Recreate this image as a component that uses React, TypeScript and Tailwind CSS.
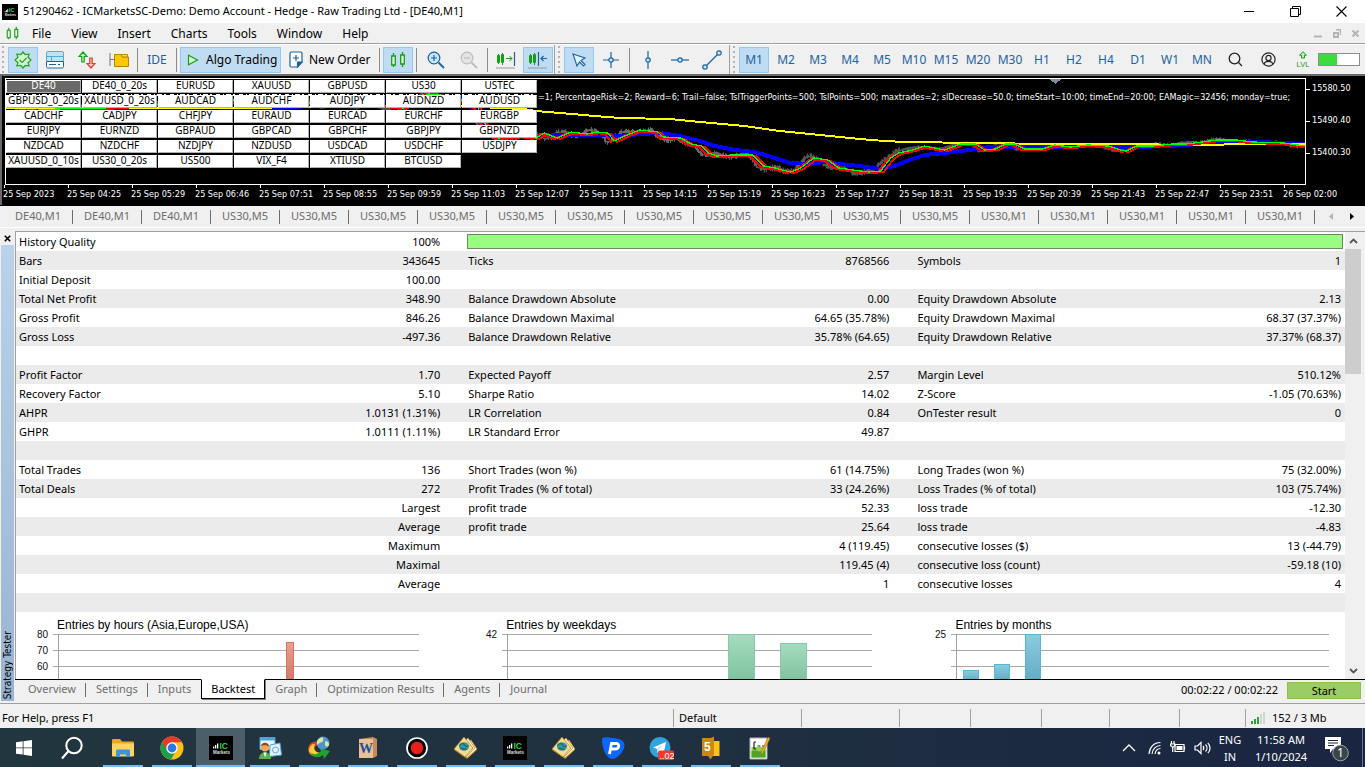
import React from "react";

/* ---------- data ---------- */

const menus = ["File", "View", "Insert", "Charts", "Tools", "Window", "Help"];

const timeframes = ["M1", "M2", "M3", "M4", "M5", "M10", "M15", "M20", "M30", "H1", "H2", "H4", "D1", "W1", "MN"];

const symbols = [
  "DE40", "DE40_0_20s", "EURUSD", "XAUUSD", "GBPUSD", "US30", "USTEC",
  "GBPUSD_0_20s", "XAUUSD_0_20s", "AUDCAD", "AUDCHF", "AUDJPY", "AUDNZD", "AUDUSD",
  "CADCHF", "CADJPY", "CHFJPY", "EURAUD", "EURCAD", "EURCHF", "EURGBP",
  "EURJPY", "EURNZD", "GBPAUD", "GBPCAD", "GBPCHF", "GBPJPY", "GBPNZD",
  "NZDCAD", "NZDCHF", "NZDJPY", "NZDUSD", "USDCAD", "USDCHF", "USDJPY",
  "XAUUSD_0_10s", "US30_0_20s", "US500", "VIX_F4", "XTIUSD", "BTCUSD",
];

const times = [
  "25 Sep 2023", "25 Sep 04:25", "25 Sep 05:29", "25 Sep 06:46", "25 Sep 07:51", "25 Sep 08:55", "25 Sep 09:59",
  "25 Sep 11:03", "25 Sep 12:07", "25 Sep 13:11", "25 Sep 14:15", "25 Sep 15:19", "25 Sep 16:23", "25 Sep 17:27",
  "25 Sep 18:31", "25 Sep 19:35", "25 Sep 20:39", "25 Sep 21:43", "25 Sep 22:47", "25 Sep 23:51", "26 Sep 02:00",
];

const chartTabs = [
  ...Array(3).fill("DE40,M1"),
  ...Array(11).fill("US30,M5"),
  ...Array(5).fill("US30,M1"),
] as string[];

const report: string[][] = [
  ["Bars", "343645", "Ticks", "8768566", "Symbols", "1"],
  ["Initial Deposit", "100.00", "", "", "", ""],
  ["Total Net Profit", "348.90", "Balance Drawdown Absolute", "0.00", "Equity Drawdown Absolute", "2.13"],
  ["Gross Profit", "846.26", "Balance Drawdown Maximal", "64.65 (35.78%)", "Equity Drawdown Maximal", "68.37 (37.37%)"],
  ["Gross Loss", "-497.36", "Balance Drawdown Relative", "35.78% (64.65)", "Equity Drawdown Relative", "37.37% (68.37)"],
  ["", "", "", "", "", ""],
  ["Profit Factor", "1.70", "Expected Payoff", "2.57", "Margin Level", "510.12%"],
  ["Recovery Factor", "5.10", "Sharpe Ratio", "14.02", "Z-Score", "-1.05 (70.63%)"],
  ["AHPR", "1.0131 (1.31%)", "LR Correlation", "0.84", "OnTester result", "0"],
  ["GHPR", "1.0111 (1.11%)", "LR Standard Error", "49.87", "", ""],
  ["", "", "", "", "", ""],
  ["Total Trades", "136", "Short Trades (won %)", "61 (14.75%)", "Long Trades (won %)", "75 (32.00%)"],
  ["Total Deals", "272", "Profit Trades (% of total)", "33 (24.26%)", "Loss Trades (% of total)", "103 (75.74%)"],
  ["", "Largest", "profit trade", "52.33", "loss trade", "-12.30"],
  ["", "Average", "profit trade", "25.64", "loss trade", "-4.83"],
  ["", "Maximum", "", "4 (119.45)", "consecutive losses ($)", "13 (-44.79)"],
  ["", "Maximal", "", "119.45 (4)", "consecutive loss (count)", "-59.18 (10)"],
  ["", "Average", "", "1", "consecutive losses", "4"],
  ["", "", "", "", "", ""],
];

/* ---------- toolbar parts ---------- */

const Grip = () => (
  <svg width="4" height="27" viewBox="0 0 4 27" aria-hidden="true">
    {[1, 6, 11, 16, 21, 26].map((y) => (
      <rect key={y} x="0" y={y - 1} width="2" height="2" fill="#b4b4b4" />
    ))}
  </svg>
);

const Sep = () => <span className="mx-px h-6 w-px bg-[#8c8c8c]" />;

function Tool({ label, active, wide, children }: { label: string; active?: boolean; wide?: boolean; children: React.ReactNode }) {
  return (
    <button
      type="button"
      aria-label={label}
      className={
        "flex h-[26px] shrink-0 items-center justify-center border " +
        (wide ? "w-8 " : "w-[30px] ") +
        (active ? "border-[#90c8f6] bg-[#c0dcf3]" : "border-transparent")
      }
    >
      {children}
    </button>
  );
}

const Candles = ({ size = 18 }: { size?: number }) => (
  <svg width={size} height={size} viewBox="0 0 18 18" fill="#e6f7e6" stroke="#12a012" strokeWidth="1.3" aria-hidden="true">
    <path d="M4.5 2v14M13.5 1v15" />
    <path d="M2.7 5h3.6v9H2.7zM11.7 4h3.6v9h-3.6z" />
  </svg>
);

const IcLogo = ({ size }: { size: number }) => (
  <svg width={size} height={size} viewBox="0 0 24 24" aria-hidden="true">
    <rect width="24" height="24" fill="#000" />
    <path d="M4 12.500h1.300v-2H4zM6 12.500h1.300V9H6zM8 12.500h1.300v-5H8z" fill="#fff" />
    <text x="10.500" y="12.500" fontSize="8.500" fontWeight="700" fontFamily="Liberation Sans, sans-serif" fill="#2fd24a">IC</text>
    <text x="4" y="18" fontSize="4.500" fontWeight="700" fontFamily="Liberation Sans, sans-serif" fill="#ddd">Markets</text>
  </svg>
);

/* ---------- price chart ---------- */

type Pt = [number, number];

const yellow: Pt[] = [[5, 108], [210, 108], [460, 106], [499, 108], [524, 109], [536, 111], [560, 113], [595, 116], [620, 118], [670, 119], [700, 122], [745, 126], [780, 131], [820, 135], [860, 139], [885, 141], [905, 142], [980, 143], [1050, 144], [1120, 144], [1200, 145], [1250, 144], [1306, 144]];
const blue: Pt[] = [[5, 115], [60, 110], [155, 108], [210, 112], [460, 97], [475, 110], [485, 126], [510, 135], [535, 137], [560, 135], [600, 135], [618, 136], [640, 134], [660, 133], [680, 136], [700, 141], [715, 146], [735, 150], [755, 152], [775, 158], [790, 163], [810, 164], [825, 162], [840, 164], [860, 166], [880, 169], [895, 166], [910, 160], [925, 155], [945, 153], [970, 150], [990, 147], [1020, 147], [1060, 147], [1100, 146], [1135, 147], [1170, 146], [1200, 144], [1220, 142], [1260, 142], [1306, 144]];
const price: Pt[] = [[5, 112], [70, 108], [100, 108], [160, 104], [232, 100], [308, 103], [380, 105], [400, 108], [425, 94], [445, 96], [462, 101], [475, 108], [480, 122], [495, 138], [520, 136], [533, 138], [541, 133], [554, 138], [568, 132], [584, 134], [594, 132], [605, 133], [611, 141], [624, 135], [637, 130], [655, 132], [660, 137], [678, 138], [688, 144], [699, 146], [706, 153], [714, 156], [730, 155], [750, 155], [761, 166], [772, 168], [788, 172], [798, 168], [811, 158], [825, 160], [836, 168], [850, 170], [866, 172], [878, 171], [888, 158], [896, 153], [910, 150], [922, 146], [942, 150], [958, 144], [973, 144], [982, 150], [993, 149], [1003, 144], [1012, 144], [1022, 149], [1040, 149], [1052, 145], [1068, 147], [1085, 145], [1106, 146], [1118, 150], [1124, 151], [1134, 146], [1150, 146], [1170, 144], [1184, 144], [1200, 142], [1215, 140], [1235, 140], [1250, 142], [1282, 143], [1295, 145], [1306, 146]];

const toPoints = (pts: Pt[], dx = 0, dy = 0) => pts.map(([x, y]) => `${x + dx},${y + dy}`).join(" ");

function priceAt(x: number) {
  for (let i = 1; i < price.length; i++) {
    if (x <= price[i][0]) {
      const [x0, y0] = price[i - 1];
      const [x1, y1] = price[i];
      return y0 + ((y1 - y0) * (x - x0)) / (x1 - x0);
    }
  }
  return price[price.length - 1][1];
}

const wicks = (() => {
  let d = "";
  let seed = 7;
  for (let x = 8; x < 1304; x += 1) {
    seed = (seed * 16807) % 2147483647;
    const r = (seed % 1000) / 1000;
    const spread = x < 900 ? 1 : 0.5;
    const y = priceAt(x + 4) + Math.sin(x / 5) * 2 * spread;
    const half = 0.5 + r * 3 * spread;
    d += `M${x + 0.5} ${(y - half).toFixed(1)}V${(y + half).toFixed(1)}`;
  }
  return d;
})();

function PriceChart() {
  return (
    <section className="relative flex h-[131px] shrink-0 flex-col overflow-hidden border-l-2 border-t-2 border-[#696969] bg-black font-['DejaVu_Sans_Condensed','DejaVu_Sans',sans-serif] text-[9px] text-white">
      <div className="flex pt-0.5 pl-[3px]">
        <div className="relative h-[107px] min-w-0 flex-1 border border-white">
          <svg className="block h-full w-full" viewBox="5 79 1301 105" preserveAspectRatio="none" fill="none" shapeRendering="crispEdges" aria-label="DE40 price chart">
            <path d="M1050 79h12l-6 5z" fill="#7f8aa0" />
            <path d="M8 94.500H535" stroke="#fff" strokeWidth="2" strokeDasharray="4 3 1 2 5 2 2 4" />
            <path d={wicks} stroke="#707070" strokeWidth="1" />
            <polyline points={toPoints(blue)} stroke="#0000ff" strokeWidth="4" />
            <polyline points={toPoints(yellow)} stroke="#ffff00" strokeWidth="2" />
            <polyline points={toPoints(price, 6, 1)} stroke="#ff0000" strokeWidth="2" />
            <polyline points={toPoints(price, 0, 1)} stroke="#ff0000" strokeWidth="2" />
            <polyline points={toPoints(price, 3, 0)} stroke="#00ff00" strokeWidth="1.300" />
          </svg>
          <p className="absolute top-[10px] right-[2px] left-[532px] overflow-hidden leading-4 whitespace-nowrap">
            =1; PercentageRisk=2; Reward=6; Trail=false; TslTriggerPoints=500; TslPoints=500; maxtrades=2; slDecrease=50.0; timeStart=10:00; timeEnd=20:00; EAMagic=32456; monday=true;
          </p>
        </div>
        <ul className="flex w-[59px] shrink-0 flex-col gap-4 pt-[3px]">
          {["15580.50", "15490.40", "15400.30"].map((p) => (
            <li key={p} className="flex h-4 items-center gap-[2px]">
              <span className="h-px w-1 bg-white" />
              {p}
            </li>
          ))}
        </ul>
      </div>
      <ol className="flex pl-px">
        {times.map((t) => (
          <li key={t} className="flex w-16 shrink-0 flex-col whitespace-nowrap">
            <span className="ml-px h-[3px] w-px bg-white" />
            <span className="leading-3">{t}</span>
          </li>
        ))}
      </ol>
      <div className="absolute top-[4px] left-[4px] grid grid-cols-7 gap-x-px gap-y-[2px] font-['Noto_Sans',sans-serif]">
        {symbols.map((s, i) => (
          <button
            key={s}
            type="button"
            className={
              "flex h-[13px] w-[75px] items-center justify-center border border-r-[#b0b0b0] border-b-[#b0b0b0] border-t-white border-l-white pb-[2px] text-[10px] leading-[9px] whitespace-nowrap " +
              (i === 0 ? "bg-[#696969] text-white" : "bg-white text-black")
            }
          >
            {s}
          </button>
        ))}
      </div>
    </section>
  );
}

/* ---------- distribution charts ---------- */

interface Bar { x: number; w: number; top: number }

function Distribution({ title, labels, bars, end, axis, from, to, line, id }: {
  title: string; labels: string[]; bars: Bar[]; end: number; axis: number; from: string; to: string; line: string; id: string;
}) {
  return (
    <figure className="font-['Liberation_Sans',Arial,sans-serif] text-[12px] text-black">
      <figcaption className="pt-[6px] pl-[41px] leading-[14px]">{title}</figcaption>
      <svg width="449" height="47" viewBox="0 0 449 47" className="block overflow-visible" aria-hidden="true">
        <defs>
          <linearGradient id={id} x1="0" y1="0" x2="0" y2="1">
            <stop offset="0" stopColor={from} />
            <stop offset="1" stopColor={to} />
          </linearGradient>
        </defs>
        {[2, 18, 34].map((y) => (
          <rect key={y} x={axis - 5} y={y} width={end - axis + 5} height="1" fill="#a8a8a8" />
        ))}
        <rect x={axis} y="2" width="1" height="45" fill="#a0a0a0" />
        {labels.map((l, i) => (
          <text key={l} x={axis - 10} y={6 + i * 16} fontSize="10" textAnchor="end" fill="#111">{l}</text>
        ))}
        {bars.map((b) => (
          <rect key={b.x} x={b.x + 0.5} y={b.top + 0.5} width={b.w - 1} height={48 - b.top} fill={`url(#${id})`} stroke={line} />
        ))}
      </svg>
    </figure>
  );
}

/* ---------- strategy tester ---------- */

const testerTabs = ["Overview", "Settings", "Inputs", "Backtest", "Graph", "Optimization Results", "Agents", "Journal"];

function Tester() {
  return (
    <section className="flex min-h-0 flex-1 pt-[3px]">
      <aside className="flex w-[15px] shrink-0 flex-col pb-[2px] pl-px">
        <button type="button" aria-label="Close tester" className="flex h-[14px] w-3 items-center justify-center">
          <svg width="7" height="7" viewBox="0 0 7 7" stroke="#000" strokeWidth="1.600"><path d="M.8.8l5.400 5.400M6.200.8L.8 6.200" /></svg>
        </button>
        <div className="flex min-h-0 w-[13px] flex-1 items-end justify-center bg-gradient-to-b from-[#bad2ea] to-[#99b4d1] pb-[2px]">
          <span className="rotate-180 text-[10px] leading-3 whitespace-nowrap text-black [writing-mode:vertical-rl] font-['DejaVu_Sans_Condensed',sans-serif]">
            Strategy Tester
          </span>
        </div>
      </aside>
      <div className="flex min-w-0 flex-1 flex-col border-t border-[#a0a0a0]">
        <div className="flex min-h-0 flex-1 border-l border-[#a0a0a0] bg-white">
          <div className="min-w-0 flex-1 overflow-hidden">
            <table className="w-full table-fixed border-collapse leading-[19px]">
              <colgroup>
                <col className="w-[15%]" />
                <col className="w-[18.8%]" />
                <col className="w-[15%]" />
                <col className="w-[18.8%]" />
                <col className="w-[15%]" />
                <col />
              </colgroup>
              <tbody>
                <tr className="h-[19px]">
                  <td className="p-0 pl-[3px]">History Quality</td>
                  <td className="p-0 pr-[25px] text-right">100%</td>
                  <td colSpan={4} className="p-0 pr-[2px] pl-[2px]">
                    <div className="h-[15px] border border-[#6b8a62] bg-[#98fd80]" />
                  </td>
                </tr>
                {report.map((row, i) => (
                  <tr key={i} className={"h-[19px] " + (i % 2 === 0 ? "bg-[#ebebeb]" : "bg-white")}>
                    {row.map((cell, j) => (
                      <td
                        key={j}
                        className={
                          j % 2 === 0
                            ? "p-0 pl-[3px] whitespace-nowrap"
                            : j === 5
                              ? "p-0 pr-1 text-right whitespace-nowrap"
                              : "p-0 pr-[25px] text-right whitespace-nowrap"
                        }
                      >
                        {cell}
                      </td>
                    ))}
                  </tr>
                ))}
              </tbody>
            </table>
            <div className="grid grid-cols-[33.8%_33.8%_1fr] overflow-hidden">
              <Distribution id="hours" title="Entries by hours (Asia,Europe,USA)" labels={["80", "70", "60"]} axis={42} end={403} bars={[{ x: 270, w: 8, top: 10 }]} from="#e8a090" to="#cf7a68" line="#e0705c" />
              <Distribution id="days" title="Entries by weekdays" labels={["42"]} axis={42} end={407} bars={[{ x: 263, w: 27, top: 2 }, { x: 315, w: 27, top: 11 }]} from="#a6dcc0" to="#7fc29e" line="#86cba6" />
              <Distribution id="months" title="Entries by months" labels={["25"]} axis={42} end={415} bars={[{ x: 49, w: 16, top: 38 }, { x: 80, w: 16, top: 32 }, { x: 111, w: 16, top: 2 }]} from="#8bcde0" to="#62abc6" line="#55b8d8" />
            </div>
          </div>
          <div className="flex w-4 shrink-0 flex-col items-center bg-[#f0f0f0]">
            <button type="button" aria-label="Scroll up" className="flex h-[17px] w-4 items-center justify-center">
              <svg width="9" height="6" viewBox="0 0 9 6" fill="none" stroke="#555" strokeWidth="1.800"><path d="M1 5l3.500-3.500L8 5" /></svg>
            </button>
            <div className="h-[125px] w-4 bg-[#cdcdcd]" />
            <button type="button" aria-label="Scroll down" className="mt-auto flex h-[17px] w-4 items-center justify-center">
              <svg width="9" height="6" viewBox="0 0 9 6" fill="none" stroke="#555" strokeWidth="1.800"><path d="M1 1l3.500 3.500L8 1" /></svg>
            </button>
          </div>
          <div className="w-1 shrink-0 bg-[#f0f0f0]" />
        </div>
        <nav className="flex h-[24px] shrink-0 border-t border-black bg-[#f0f0f0]">
          <div className="flex pl-[3px]">
            {testerTabs.map((t, i) =>
              t === "Backtest" ? (
                <button key={t} type="button" className="-mt-px h-5 w-16 border border-t-white border-black bg-white text-black shadow-[1px_1px_0_#808080]">
                  {t}
                </button>
              ) : (
                <button key={t} type="button" className="relative flex h-[19px] items-center px-[10px] text-[#6d6d6d]">
                  {t}
                  {i !== 2 && i !== 7 && <span className="absolute top-[3px] right-0 h-[14px] w-px bg-[#6d6d6d]" />}
                </button>
              ),
            )}
          </div>
          <div className="ml-auto flex items-center gap-[9px] pr-1 pb-[2px]">
            <span>00:02:22 / 00:02:22</span>
            <button type="button" className="h-[17px] w-[74px] border border-[#8bc34a] bg-[#9ccc65] leading-[15px]">Start</button>
          </div>
        </nav>
      </div>
    </section>
  );
}

/* ---------- task bar ---------- */

const MetaTrader = () => (
  <svg width="25" height="24" viewBox="0 0 25 24" aria-hidden="true">
    <path d="M1 14l9-4 14 4-10 9z" fill="#b07a20" />
    <path d="M6 12L18 4l6 9-10 9z" fill="#fff6d0" stroke="#b88a30" strokeWidth=".7" />
    <path d="M4 12L15 2l7 10-9 9z" fill="#fdeeb4" stroke="#b88a30" strokeWidth=".7" />
    <path d="M1 13L11 1l9 11-8 9z" fill="#f3dc90" stroke="#a87a20" strokeWidth=".7" />
    <ellipse cx="11" cy="10.500" rx="5" ry="4.300" fill="#3b8fc4" />
    <path d="M6.500 10c1-3 4-3 5-1s2 2 4 .5M7.500 12.500c2-1 3 1.500 6 .5" stroke="#1f7a3a" strokeWidth="1.500" fill="none" />
  </svg>
);

const taskIcons: { name: string; icon: React.ReactNode }[] = [
  {
    name: "File Explorer",
    icon: (
      <svg width="24" height="22" viewBox="0 0 24 22" aria-hidden="true">
        <path d="M1 3.500C1 2.500 1.500 2 2.500 2H9l2 2.500h10.500c1 0 1.500.5 1.500 1.500v13H1z" fill="#e8a820" />
        <path d="M1 6.500h22V18c0 1-.5 1.500-1.500 1.500h-19C1.500 19.500 1 19 1 18z" fill="#fcd462" />
        <path d="M5 20v-6c0-1 .6-1.500 1.500-1.500h11c.9 0 1.500.5 1.500 1.500v6h-4v-2.500h-6V20z" fill="#3f93d8" />
      </svg>
    ),
  },
  {
    name: "Chrome",
    icon: (
      <svg width="24" height="24" viewBox="0 0 24 24" aria-hidden="true">
        <circle cx="12" cy="12" r="11.500" fill="#fbc116" />
        <path d="M12 12L2 6.200A11.500 11.500 0 0 0 11 23.500l5-9z" fill="#1e9e4a" />
        <path d="M2 6.200A11.500 11.500 0 0 1 22 6.200H12L7.500 15z" fill="#e33b2e" />
        <circle cx="12" cy="12" r="5.700" fill="#fff" />
        <circle cx="12" cy="12" r="4.400" fill="#2a78e4" />
      </svg>
    ),
  },
  { name: "IC Markets terminal", icon: <IcLogo size={24} /> },
  {
    name: "Accounts",
    icon: (
      <svg width="24" height="24" viewBox="0 0 24 24" aria-hidden="true">
        <path d="M2 1.500h15v12H2z" fill="#e6f3fb" stroke="#4fa3d8" />
        <path d="M2 1.500h15v3H2z" fill="#4fa3d8" />
        <path d="M12 9l10-2 1.500 12-12 1.500z" fill="#e6f3fb" stroke="#4fa3d8" />
        <circle cx="17.500" cy="14" r="3" fill="none" stroke="#5aaade" />
        <circle cx="7" cy="11.500" r="4" fill="#f2a65a" />
        <path d="M3 10.500c0-5 8-5 8 0-3-1-5-2-8 0z" fill="#8c4a17" />
        <path d="M1 23c0-9 12-9 12 0z" fill="#58b44a" />
        <path d="M5.500 16.500l1.500 5 1.500-5z" fill="#fff" />
      </svg>
    ),
  },
  {
    name: "Download Manager",
    icon: (
      <svg width="24" height="24" viewBox="0 0 24 24" aria-hidden="true">
        <path d="M1 13c1-6 5-8 10-7l1 3c-3 0-5 2-4 5 1 2 4 3 7 2l-1 4C7 22 1 19 1 13z" fill="#e0402c" />
        <path d="M2 14c1-5 3-6 6-6-2 4-1 8 5 9l-1 4C6 21 2 18 2 14z" fill="#f7d030" />
        <path d="M3 16c3 3 7 3 11-1l-2-3 11 3-6 8-1-4C11 23 5 21 3 16z" fill="#1fa32e" />
        <circle cx="16" cy="7" r="6.500" fill="#4d93d4" />
        <path d="M13 2c3-2 4 1 3 3s-4 1-5 4c-2-3-1-5 2-7zM18 5.500c2-1 4 1 4 3s-2 3-4 1z" fill="#d9e79c" />
      </svg>
    ),
  },
  {
    name: "Documents",
    icon: (
      <svg width="20" height="24" viewBox="0 0 20 24" aria-hidden="true">
        <path d="M1 3l14-2 4 2v17l-4 2H1z" fill="#c98a54" />
        <path d="M1 3h14v19H1z" fill="#e7c19a" />
        <text x="1" y="17" fontSize="14" fontWeight="700" fontFamily="Liberation Serif, serif" fill="#1f4f94">W</text>
      </svg>
    ),
  },
  {
    name: "Recorder",
    icon: (
      <svg width="24" height="24" viewBox="0 0 24 24" aria-hidden="true">
        <circle cx="12" cy="12" r="10" fill="#000" stroke="#fff" strokeWidth="1.700" />
        <circle cx="12" cy="12" r="6.200" fill="#e8201c" />
      </svg>
    ),
  },
  { name: "MetaTrader", icon: <MetaTrader /> },
  { name: "IC Markets", icon: <IcLogo size={24} /> },
  { name: "MetaTrader 2", icon: <MetaTrader /> },
  {
    name: "P app",
    icon: (
      <svg width="24" height="24" viewBox="0 0 24 24" aria-hidden="true">
        <path d="M1 4C1 1 4 1 8 1.500c5 .5 15 1 15.500 7C24 15 16 23 11 23 6 23 1 13 1 4z" fill="#0b68fa" />
        <path d="M8.500 18L10.500 7.500H15c4 0 3.500 5.500-1 5.500h-3.500" fill="none" stroke="#fff" strokeWidth="2.800" />
      </svg>
    ),
  },
  {
    name: "Telegram",
    icon: (
      <svg width="25" height="24" viewBox="0 0 25 24" aria-hidden="true">
        <circle cx="11" cy="11.500" r="10.500" fill="#2ea3dc" />
        <path d="M4 11.500l13-5.500-2.500 12-4-3-2 2-.5-4z" fill="#fff" />
        <path d="M8 13l6-4.500-4.500 5.500-1 3z" fill="#b8dcef" />
        <rect x="9" y="14.500" width="16" height="9.500" rx="2" fill="#ea3c30" />
        <text x="10.500" y="22.500" fontSize="9" fontFamily="Liberation Sans, sans-serif" fill="#fff">..02</text>
      </svg>
    ),
  },
  {
    name: "S editor",
    icon: (
      <svg width="20" height="24" viewBox="0 0 20 24" aria-hidden="true">
        <path d="M9 5h9.500v15H9z" fill="#fcc410" />
        <path d="M1 2h9l3-1.500v18L9.500 23.500 7 20H1z" fill="#c98a12" />
        <text x="3" y="15" fontSize="12" fontWeight="700" fontFamily="Liberation Sans, sans-serif" fill="#fff">5</text>
      </svg>
    ),
  },
  {
    name: "Notepad++",
    icon: (
      <svg width="23" height="24" viewBox="0 0 23 24" aria-hidden="true">
        <path d="M2 2h17v21H2z" fill="#fff" stroke="#b0b0b0" />
        <path d="M3.500 11h14v10.500h-14z" fill="#8fd04a" />
        <path d="M3.500 15c4-2 9 2 14-1v7.500h-14z" fill="#4fa428" />
        <path d="M6 6v7M6 6h2M6 13h2M9.500 10h3M14 10h3" stroke="#222" strokeWidth="1.200" fill="none" />
        <path d="M20 1l2 1.500L15 17l-2 1.500.3-2.500z" fill="#f2a92a" stroke="#a86c10" strokeWidth=".5" />
      </svg>
    ),
  },
];

function Taskbar() {
  return (
    <footer className="flex h-[39px] shrink-0 items-stretch bg-gradient-to-r from-[#22363f] via-[#1f3040] to-[#1a2542] text-white">
      <button type="button" aria-label="Start menu" className="flex w-12 items-center justify-center">
        <svg width="16" height="16" viewBox="0 0 16 16" fill="#fff"><path d="M0 2.200L6.700 1.300v6.200H0zM7.500 1.200L16 0v7.500H7.500zM0 8.300h6.700v6.300L0 13.700zM7.500 8.300H16V16l-8.500-1.200z" /></svg>
      </button>
      <button type="button" aria-label="Search" className="mr-[2px] flex w-12 items-center justify-center">
        <svg width="24" height="24" viewBox="0 0 24 24" fill="none" stroke="#fff" strokeWidth="2"><circle cx="14" cy="9.500" r="7.700" /><path d="M8.500 15L2 22.500" /></svg>
      </button>
      {taskIcons.map((t, i) => (
        <button
          key={t.name}
          type="button"
          aria-label={t.name}
          className={"flex w-[49px] flex-col items-center justify-end " + (i === 2 ? "bg-[#4c5f68]" : "")}
        >
          <span className="flex flex-1 items-center pt-[2px]">{t.icon}</span>
          <span className={"h-[2px] bg-[#76b9ed] " + (i === 2 ? "w-full" : "w-10")} />
        </button>
      ))}
      <div className="ml-auto flex items-center">
        <svg className="mr-[12px]" width="14" height="8" viewBox="0 0 14 8" fill="none" stroke="#fff" strokeWidth="1.300"><path d="M1 7l6-6 6 6" /></svg>
        <svg className="mr-[8px]" width="14" height="14" viewBox="0 0 14 14" fill="none" stroke="#fff" strokeWidth="1.200">
          <path d="M1 13C1.500 6 6 1.500 12.500 1.500M4 13c.5-5 4-8.500 8.500-8.500M7 13c.5-3 2.500-5.500 5.500-5.500" />
          <circle cx="11" cy="12" r="1.500" fill="#fff" stroke="none" />
        </svg>
        <svg className="mr-[8px]" width="16" height="13" viewBox="0 0 16 13" fill="none" stroke="#fff" strokeWidth="1.200">
          <path d="M5 3.500h9v7H5zM14.500 5.500v3" /><path d="M6.500 5h6v4h-6z" fill="#fff" stroke="none" />
          <path d="M1.500 0v3M4 0v3M.5 3h4.500v1.500L3.500 6h-1L.5 4.500zM2.700 6v5" />
        </svg>
        <svg className="mr-[7px]" width="17" height="14" viewBox="0 0 17 14" fill="none" stroke="#fff" strokeWidth="1.200">
          <path d="M1 5h2.500L7 1.500v11L3.500 9H1zM9 5c1 1.200 1 2.800 0 4M11.500 3.500c2 2 2 5 0 7M13.800 1.800c3 3 3 7.400 0 10.400" />
        </svg>
        <div className="flex w-6 flex-col text-center leading-[17px]">
          <span>ENG</span>
          <span>IN</span>
        </div>
        <div className="ml-[8px] flex w-[62px] flex-col text-center leading-[17px]">
          <span>11:58 AM</span>
          <span>1/10/2024</span>
        </div>
        <svg className="mr-[10px] ml-[12px]" width="28" height="28" viewBox="0 0 28 28" aria-label="1 notification">
          <path d="M1 3h16v12H9l-3 4v-4H1z" fill="#fff" />
          <path d="M4 6.500h10M4 9h10M4 11.500h6" stroke="#1a2542" />
          <circle cx="16.500" cy="19" r="7.800" fill="#3b434b" stroke="#9aa2a8" />
          <text x="16.500" y="23" fontSize="12" textAnchor="middle" fontFamily="Noto Sans, sans-serif" fill="#fff">1</text>
        </svg>
        <span className="h-[39px] w-px bg-[#6a7488]" />
        <span className="w-[2px]" />
      </div>
    </footer>
  );
}

/* ---------- page ---------- */

export default function App() {
  return (
    <div className="flex h-screen flex-col overflow-hidden bg-[#f0f0f0] font-['Noto_Sans','Open_Sans',sans-serif] text-[11px] text-black">
      <header className="flex h-[23px] shrink-0 items-center bg-white pl-[2px]">
        <IcLogo size={16} />
        <h1 className="ml-[5px]">51290462 - ICMarketsSC-Demo: Demo Account - Hedge - Raw Trading Ltd - [DE40,M1]</h1>
        <div className="ml-auto flex items-center gap-[35px] pr-[18px]">
          <button type="button" aria-label="Minimize"><svg width="11" height="11" viewBox="0 0 11 11"><path d="M0 5.500h10" stroke="#000" /></svg></button>
          <button type="button" aria-label="Restore"><svg width="11" height="11" viewBox="0 0 11 11" fill="none" stroke="#000"><path d="M.5 2.500h8v8h-8zM2.500 2.500v-2h8v8h-2" /></svg></button>
          <button type="button" aria-label="Close"><svg width="11" height="11" viewBox="0 0 11 11" stroke="#000" strokeWidth="1.100"><path d="M.5.5l10 10M10.500.5l-10 10" /></svg></button>
        </div>
      </header>

      <nav className="flex h-[21px] shrink-0 items-center border-b border-[#a0a0a0] pl-[5px] text-[12px]">
        <Candles size={15} />
        <div className="flex pl-[2px]">
          {menus.map((m) => (
            <button key={m} type="button" className="px-[10px] leading-[19px]">{m}</button>
          ))}
        </div>
        <div className="ml-auto flex items-center gap-[11px] pr-[6px]">
          <svg width="8" height="9" viewBox="0 0 8 9"><path d="M0 7.500h8" stroke="#b4b4b0" strokeWidth="2" /></svg>
          <svg width="8" height="9" viewBox="0 0 8 9" fill="none" stroke="#b4b4b0"><path d="M1 4h4v4H1z" strokeWidth="2" /><path d="M3 .7h4.500V6" strokeWidth="1.400" /></svg>
          <svg width="7" height="7" viewBox="0 0 7 7" stroke="#b4b4b0" strokeWidth="2"><path d="M.5.5l6 6M6.500.5l-6 6" /></svg>
        </div>
      </nav>

      <div className="flex h-[30px] shrink-0 items-center border-t border-white text-[#1a62a0]">
        <div className="flex h-full items-center gap-[2px] border-r border-[#a0a0a0] pr-px pl-[2px]">
          <Grip />
          <Tool label="Trade" active>
            <svg width="18" height="18" viewBox="0 0 18 18" fill="#d4f4d4" stroke="#1fa01f" strokeWidth="1.200">
              <path d="M9 1l2.200 2.700 4-.7-1.200 3.300L17 9l-3 2.700 1.200 3.300-4-.7L9 17l-2.200-2.700-4 .7L4 11.700 1 9l3-2.700L2.800 3l4 .7z" strokeLinejoin="round" />
              <path d="M5.500 9l2.500 2.500L12.500 7" fill="none" />
            </svg>
          </Tool>
          <Tool label="Toolbox">
            <svg width="18" height="18" viewBox="0 0 18 18" fill="#bde3f8" stroke="#5aa8d8">
              <rect x=".5" y=".5" width="17" height="10" rx="1.500" /><path d="M.5 5.500h17M5.500 5.500v5" />
              <path d="M.5 10.500h17v5c0 1-.5 1.500-1.500 1.500H2C1 17 .5 16.500.5 15.500z" fill="#fff" stroke="#1a62a0" /><path d="M3 13.500h7M12 13.500h2" stroke="#1a62a0" />
            </svg>
          </Tool>
          <Tool label="Market depth">
            <svg width="18" height="18" viewBox="0 0 18 18" strokeWidth="1.200">
              <path d="M5 1L1 5.500h2.800V11h2.400V5.500H9z" fill="#c8f0c8" stroke="#12a012" />
              <path d="M13 17l-4-4.500h2.800V7h2.400v5.500H17z" fill="#fbc9c4" stroke="#e03a2c" />
            </svg>
          </Tool>
          <Tool label="Navigator">
            <svg width="20" height="16" viewBox="0 0 20 16">
              <path d="M1 1v13M1 7.500h4" stroke="#777" fill="none" />
              <path d="M5.500 2.500H12l1.500 2.500h6v9.500h-14z" fill="#fcc800" stroke="#b98500" /><path d="M12 2.500h6.500V5h-5z" fill="#fddc50" stroke="#b98500" />
            </svg>
          </Tool>
          <Sep />
          <button type="button" className="h-[26px] w-8 text-[12px]">IDE</button>
          <Sep />
          <button type="button" className="flex h-[26px] w-[101px] items-center gap-[7px] border border-[#90c8f6] bg-[#c0dcf3] pl-[6px] text-[12px] whitespace-nowrap text-black">
            <svg className="shrink-0" width="12" height="12" viewBox="0 0 12 12" fill="#d8f5d8" stroke="#12a012" strokeWidth="1.200"><path d="M1.500 1.200l9 4.800-9 4.800z" /></svg>
            Algo Trading
          </button>
          <button type="button" className="flex h-[26px] w-[93px] items-center gap-[6px] pl-[6px] text-[12px] whitespace-nowrap text-black">
            <svg className="shrink-0" width="14" height="17" viewBox="0 0 14 17" fill="#fff" stroke="#1a62a0" strokeWidth="1.200">
              <path d="M2.500 1h9c1 0 1.500.5 1.500 1.500V11l-4.500 5h-6C1.500 16 1 15.500 1 14.500v-12C1 1.500 1.500 1 2.500 1z" /><path d="M13 11H8.500v5z" fill="#1a62a0" /><path d="M7 4v6M4 7h6" />
            </svg>
            New Order
          </button>
          <Sep />
          <Tool label="Candlesticks" active><Candles /></Tool>
          <Sep />
          <Tool label="Zoom in" wide>
            <svg width="18" height="18" viewBox="0 0 18 18" fill="#c9e8fb" stroke="#1a62a0" strokeWidth="1.200"><circle cx="7" cy="7" r="5.800" /><path d="M7 4v6M4 7h6" /><path d="M11.500 11.500l5.500 5.500" strokeWidth="1.800" /></svg>
          </Tool>
          <Tool label="Zoom out">
            <svg width="18" height="18" viewBox="0 0 18 18" fill="#e4e4e4" stroke="#bcbcbc" strokeWidth="1.200"><circle cx="7" cy="7" r="5.800" /><path d="M4 7h6" /><path d="M11.500 11.500l5.500 5.500" strokeWidth="1.800" /></svg>
          </Tool>
          <Sep />
          <Tool label="Auto scroll">
            <svg width="20" height="18" viewBox="0 0 20 18" fill="none" stroke="#12a012">
              <path d="M2.500 3v10M6.500 2v12M1.500 4.500h2v7h-2zM5.500 3.500h2v8h-2zM10 7.500h6M13.500 5l2.500 2.500-2.500 2.500" /><path d="M18.500 1v14" stroke="#1a62a0" strokeWidth="1.200" /><path d="M0 17h19" stroke="#999" />
            </svg>
          </Tool>
          <Tool label="Chart shift" active>
            <svg width="20" height="18" viewBox="0 0 20 18" fill="none" stroke="#12a012">
              <path d="M2.500 3v10M6.500 2v12M1.500 4.500h2v7h-2zM5.500 3.500h2v8h-2z" /><path d="M10.500 1v14M19 7.500h-6M15.500 5L13 7.500l2.500 2.500" stroke="#1a62a0" strokeWidth="1.200" /><path d="M0 17h19" stroke="#999" />
            </svg>
          </Tool>
        </div>
        <div className="flex h-full items-center gap-[2px] border-r border-[#a0a0a0] pr-[2px] pl-[3px]">
          <Grip />
          <Tool label="Cursor" active>
            <svg width="14" height="14" viewBox="0 0 14 14" fill="#e3f3fd" stroke="#1a62a0" strokeWidth="1.100"><path d="M1 1l12 4-4 2.500 4 4L11.500 13l-4-4L5 13z" /></svg>
          </Tool>
          <Tool label="Crosshair">
            <svg width="18" height="18" viewBox="0 0 18 18" fill="#c9e8fb" stroke="#1a62a0" strokeWidth="1.200"><path d="M9 1v16M1 9h16" /><circle cx="9" cy="9" r="2.200" /></svg>
          </Tool>
          <Sep />
          <Tool label="Vertical line">
            <svg width="18" height="18" viewBox="0 0 18 18" fill="#c9e8fb" stroke="#1a62a0" strokeWidth="1.200"><path d="M9 0v18" /><circle cx="9" cy="9" r="2.200" /></svg>
          </Tool>
          <Tool label="Horizontal line">
            <svg width="18" height="18" viewBox="0 0 18 18" fill="#c9e8fb" stroke="#1a62a0" strokeWidth="1.200"><path d="M0 9h18" /><circle cx="9" cy="9" r="2.200" /></svg>
          </Tool>
          <Tool label="Trend line">
            <svg width="20" height="20" viewBox="0 0 20 20" fill="#c9e8fb" stroke="#1a62a0" strokeWidth="1.200"><path d="M3 17L17 3" /><circle cx="3" cy="17" r="2.200" /><circle cx="17" cy="3" r="2.200" /></svg>
          </Tool>
        </div>
        <div className="flex items-center gap-[2px] pl-[3px] text-[12px]">
          <Grip />
          {timeframes.map((t, i) => (
            <Tool key={t} label={t} active={i === 0}>{t}</Tool>
          ))}
        </div>
        <div className="ml-auto flex items-center pr-[5px]">
          <svg className="mr-[18px]" width="15" height="15" viewBox="0 0 15 15" fill="none" stroke="#222" strokeWidth="1.300"><circle cx="6.500" cy="6.500" r="5.300" /><path d="M10.500 10.500l3.500 3.500" /></svg>
          <svg className="mr-[18px]" width="15" height="15" viewBox="0 0 15 15" fill="none" stroke="#222" strokeWidth="1.200"><circle cx="7.500" cy="7.500" r="6.600" /><circle cx="7.500" cy="6" r="2.600" /><path d="M3.300 12c.5-3.600 7.900-3.600 8.400 0" /></svg>
          <svg className="mr-[6px]" width="18" height="17" viewBox="0 0 18 17"><path d="M9 .8l3.500 3.400H10.500V7h-3V4.200h-2z" fill="#c8f0c8" stroke="#12a012" /><text x="9" y="16" fontSize="7.500" fontFamily="Liberation Sans, sans-serif" textAnchor="middle" fill="#12a012">LVL</text></svg>
          <div className="flex h-[13px] w-[42px] border border-[#8c8c8c] bg-white"><span className="w-[45%] bg-[#3ddb3d]" /></div>
        </div>
      </div>

      <PriceChart />

      <nav className="flex h-[23px] shrink-0 items-center border-t border-b border-t-black border-b-white pl-1 text-[#6d6d6d]">
        {chartTabs.map((t, i) => (
          <button key={i} type="button" className="flex h-[14px] w-[69px] items-center justify-center border-r border-[#6d6d6d] whitespace-nowrap">{t}</button>
        ))}
        <div className="ml-auto flex items-center gap-[17px] pr-[11px]">
          <svg width="4" height="7" viewBox="0 0 4 7"><path d="M4 0v7L0 3.500z" fill="#b4b4b4" /></svg>
          <svg width="4" height="7" viewBox="0 0 4 7"><path d="M0 0v7l4-3.500z" fill="#000" /></svg>
        </div>
      </nav>

      <Tester />

      <div className="flex h-[25px] shrink-0 items-center border-t border-[#a0a0a0] pt-1 leading-[18px]">
        <span className="flex-1 pl-[2px]">For Help, press F1</span>
        <span className="h-[18px] w-32 border-l border-[#a0a0a0] pl-[5px]">Default</span>
        <span className="h-[18px] w-[98px] border-l border-[#a0a0a0]" />
        <span className="h-[18px] w-[71px] border-l border-[#a0a0a0]" />
        <span className="h-[18px] w-[71px] border-l border-[#a0a0a0]" />
        <span className="h-[18px] w-[68px] border-l border-[#a0a0a0]" />
        <span className="h-[18px] w-[70px] border-l border-[#a0a0a0]" />
        <span className="h-[18px] w-[66px] border-l border-[#a0a0a0]" />
        <span className="flex h-[18px] w-[120px] items-center gap-[7px] border-l border-[#a0a0a0] pl-[5px]">
          <svg width="14" height="12" viewBox="0 0 14 12"><path d="M0 9h2v3H0zM3 7h2v5H3zM6 5h2v7H6z" fill="#22a83a" /><path d="M9 2h2v10H9zM12 0h2v12h-2z" fill="#d4d4d4" /></svg>
          152 / 3 Mb
        </span>
      </div>

      <Taskbar />
    </div>
  );
}
